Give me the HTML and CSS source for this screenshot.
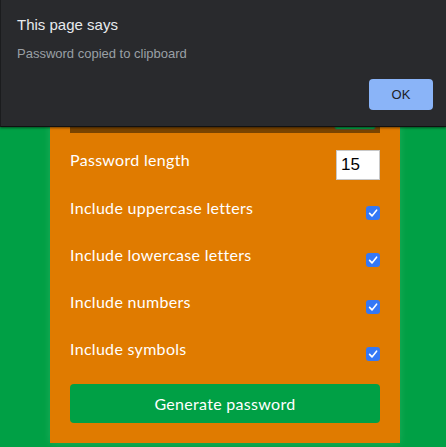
FILE: index.html
```html
<!DOCTYPE html>
<html>
<head>
<meta charset="utf-8">
<link rel="stylesheet" href="styles.css">
</head>
<body>
<main class="page">
  <section class="card">
    <div class="display">
      <button class="copy" aria-label="Copy"></button>
    </div>
    <div class="row row-length">
      <label>Password length</label>
      <input class="num" type="number" value="15">
    </div>
    <div class="row row-check">
      <label>Include uppercase letters</label>
      <span class="check"><svg viewBox="0 0 14 14" width="14" height="14"><path d="M3.6 7.4 L6 9.9 L10.6 4.2" fill="none" stroke="#fff" stroke-width="1.6" stroke-linecap="round" stroke-linejoin="round"/></svg></span>
    </div>
    <div class="row row-check">
      <label>Include lowercase letters</label>
      <span class="check"><svg viewBox="0 0 14 14" width="14" height="14"><path d="M3.6 7.4 L6 9.9 L10.6 4.2" fill="none" stroke="#fff" stroke-width="1.6" stroke-linecap="round" stroke-linejoin="round"/></svg></span>
    </div>
    <div class="row row-check">
      <label>Include numbers</label>
      <span class="check"><svg viewBox="0 0 14 14" width="14" height="14"><path d="M3.6 7.4 L6 9.9 L10.6 4.2" fill="none" stroke="#fff" stroke-width="1.6" stroke-linecap="round" stroke-linejoin="round"/></svg></span>
    </div>
    <div class="row row-check">
      <label>Include symbols</label>
      <span class="check"><svg viewBox="0 0 14 14" width="14" height="14"><path d="M3.6 7.4 L6 9.9 L10.6 4.2" fill="none" stroke="#fff" stroke-width="1.6" stroke-linecap="round" stroke-linejoin="round"/></svg></span>
    </div>
    <button class="generate">Generate password</button>
  </section>
</main>
<div class="dialog" role="alertdialog">
  <div class="dialog-title">This page says</div>
  <div class="dialog-msg">Password copied to clipboard</div>
  <div class="dialog-actions"><button class="ok">OK</button></div>
</div>
</body>
</html>
```
FILE: styles.css
```css
html, body {
  margin: 0;
  padding: 0;
  background: #00a045;
  height: 100%;
  overflow: hidden;
}
body {
  font-family: Lato, "Open Sans", sans-serif;
}
.page {
  display: flex;
  padding-left: 50px;
}
.card {
  width: 350px;
  box-sizing: border-box;
  background: #e07b00;
  padding: 0 20px 20px;
  display: flex;
  flex-direction: column;
  box-shadow: 0 0 8px rgba(255,255,255,0.12);
}
.display {
  height: 133px;
  background: #7a4400;
  position: relative;
}
.copy {
  position: absolute;
  right: 4px;
  bottom: 3px;
  width: 42px;
  height: 30px;
  background: #00a045;
  border: 1px solid #5a4a30;
  border-radius: 3px;
  padding: 0;
}
.row {
  display: flex;
  justify-content: space-between;
  align-items: center;
  color: #fff;
  font-size: 16px;
}
.row label {
  letter-spacing: 0.3px;
}
.row-length {
  margin-top: 17px;
  height: 30px;
}
.row-length label {
  margin-top: -11px;
}
.num {
  width: 44px;
  height: 30px;
  box-sizing: border-box;
  border: 1px solid #c8c8c8;
  background: #fff;
  font-family: "Liberation Sans", Arial, sans-serif;
  font-size: 17px;
  padding: 0 0 0 4px;
  margin: 0;
  color: #000;
  outline: none;
  -moz-appearance: textfield;
}
.num::-webkit-inner-spin-button,
.num::-webkit-outer-spin-button {
  -webkit-appearance: none;
  margin: 0;
}
.row-check {
  height: 24px;
  margin-top: 23px;
}
.row-check label {
  margin-bottom: 8px;
}
.row-length + .row-check {
  margin-top: 19px;
}
.check {
  width: 14px;
  height: 14px;
  border-radius: 3px;
  background: #3478f6;
  display: flex;
  margin-top: 4px;
}
.generate {
  margin-top: 20px;
  height: 39px;
  border: none;
  border-radius: 4px;
  background: #00a045;
  color: #fff;
  font-family: Lato, "Open Sans", sans-serif;
  font-size: 16px;
  letter-spacing: 0.3px;
  padding: 0;
}
.dialog {
  position: absolute;
  left: 0;
  top: 0;
  width: 446px;
  height: 127px;
  box-sizing: border-box;
  background: #292a2d;
  border-left: 1px solid #1b1c1e;
  border-bottom: 1px solid #111;
  box-shadow: 0 1px 2px rgba(0,0,0,0.5);
  font-family: "Liberation Sans", Arial, sans-serif;
  padding: 16px 13px 0 16px;
}
.dialog-title {
  color: #e8eaed;
  font-size: 15px;
  line-height: 18px;
}
.dialog-msg {
  color: #9aa0a6;
  font-size: 13px;
  line-height: 14px;
  margin-top: 13px;
}
.dialog-actions {
  display: flex;
  justify-content: flex-end;
  margin-top: 18px;
}
.ok {
  width: 64px;
  height: 31px;
  border: none;
  border-radius: 4px;
  background: #8ab4f8;
  color: #202124;
  font-family: "Liberation Sans", Arial, sans-serif;
  font-size: 13px;
  padding: 0;
}
```
